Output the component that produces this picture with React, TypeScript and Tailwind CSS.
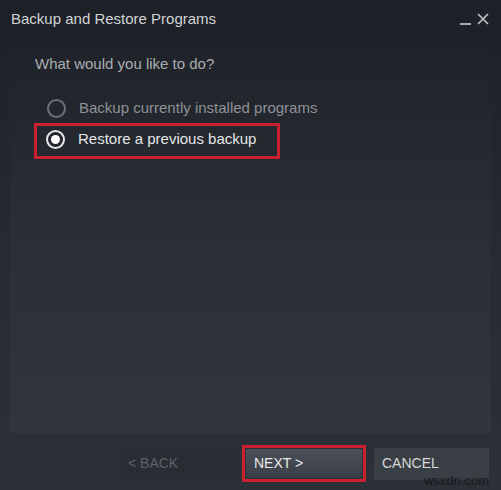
import React from 'react';

const font = { fontFamily: '"Liberation Sans", Arial, sans-serif' };

const Radio = ({ checked }: { checked?: boolean }) =>
  checked ? (
    <span className="w-[19px] h-[19px] rounded-full border-[2.5px] border-[#e6e8ea] flex items-center justify-center shrink-0">
      <span className="w-[9px] h-[9px] rounded-full bg-white" />
    </span>
  ) : (
    <span className="w-[19px] h-[19px] rounded-full border-2 border-[#6c7076] shrink-0" />
  );

export default function App() {
  return (
    <div
      className="w-[501px] h-[490px] flex flex-col bg-gradient-to-b from-[#1d2027] via-[#262a31] to-[#2c3037] text-[15px] relative overflow-hidden"
      style={font}
    >
      <div className="h-[38px] flex items-start justify-between pl-[11px] pr-[12px] pt-[10px]">
        <span className="text-[#d2d4d6] leading-[18px]">Backup and Restore Programs</span>
        <div className="flex items-start gap-[6px] pt-[2px]">
          <span className="w-[11px] h-[2px] bg-[#a7abaf] mt-[11px]" />
          <svg width="12" height="12" viewBox="0 0 12 12" className="mt-[1px]">
            <path d="M1 1 L11 11 M11 1 L1 11" stroke="#c3c6c9" strokeWidth="1.6" />
          </svg>
        </div>
      </div>

      <div className="mx-[10px] h-[395px] bg-gradient-to-b from-[#1f2229] via-[#2a2e35] to-[#31353c] pt-[17px] pl-[25px]">
        <div className="text-[#a9adb1] leading-[18px]">What would you like to do?</div>
        <div className="mt-[20px] flex flex-col items-start">
          <div className="flex items-center gap-[13px] pl-[12px] h-[30px]">
            <Radio />
            <span className="text-[#8e9297]">Backup currently installed programs</span>
          </div>
          <div className="flex items-center gap-[13px] pl-[9px] pr-[21px] pb-[4px] h-[36px] border-[3px] border-[#c8202c] -ml-[1px]">
            <Radio checked />
            <span className="text-[#e4e6e8]">Restore a previous backup</span>
          </div>
        </div>
      </div>

      <div className="flex items-center justify-end pr-[12px] mt-[12px] text-[14px]">
        <button className="w-[120px] h-[32px] bg-[#292c33] text-left pl-[8px] text-[#5d6168] mr-[2px]">&lt; BACK</button>
        <div className="border-[3px] border-[#cc2130] p-[1px] mr-[8px]">
          <button className="w-[116px] h-[29px] bg-gradient-to-b from-[#4b5059] to-[#3a3e46] text-left pl-[8px] text-[#e8eaec]">
            NEXT &gt;
          </button>
        </div>
        <button className="w-[115px] h-[32px] bg-[#3a3e45] text-left pl-[8px] text-[#d6d8da]">CANCEL</button>
      </div>

      <span className="absolute right-[12px] bottom-[2px] text-[#16181c] text-[13px] leading-[14px]">
        wsxdn.com
      </span>
    </div>
  );
}
